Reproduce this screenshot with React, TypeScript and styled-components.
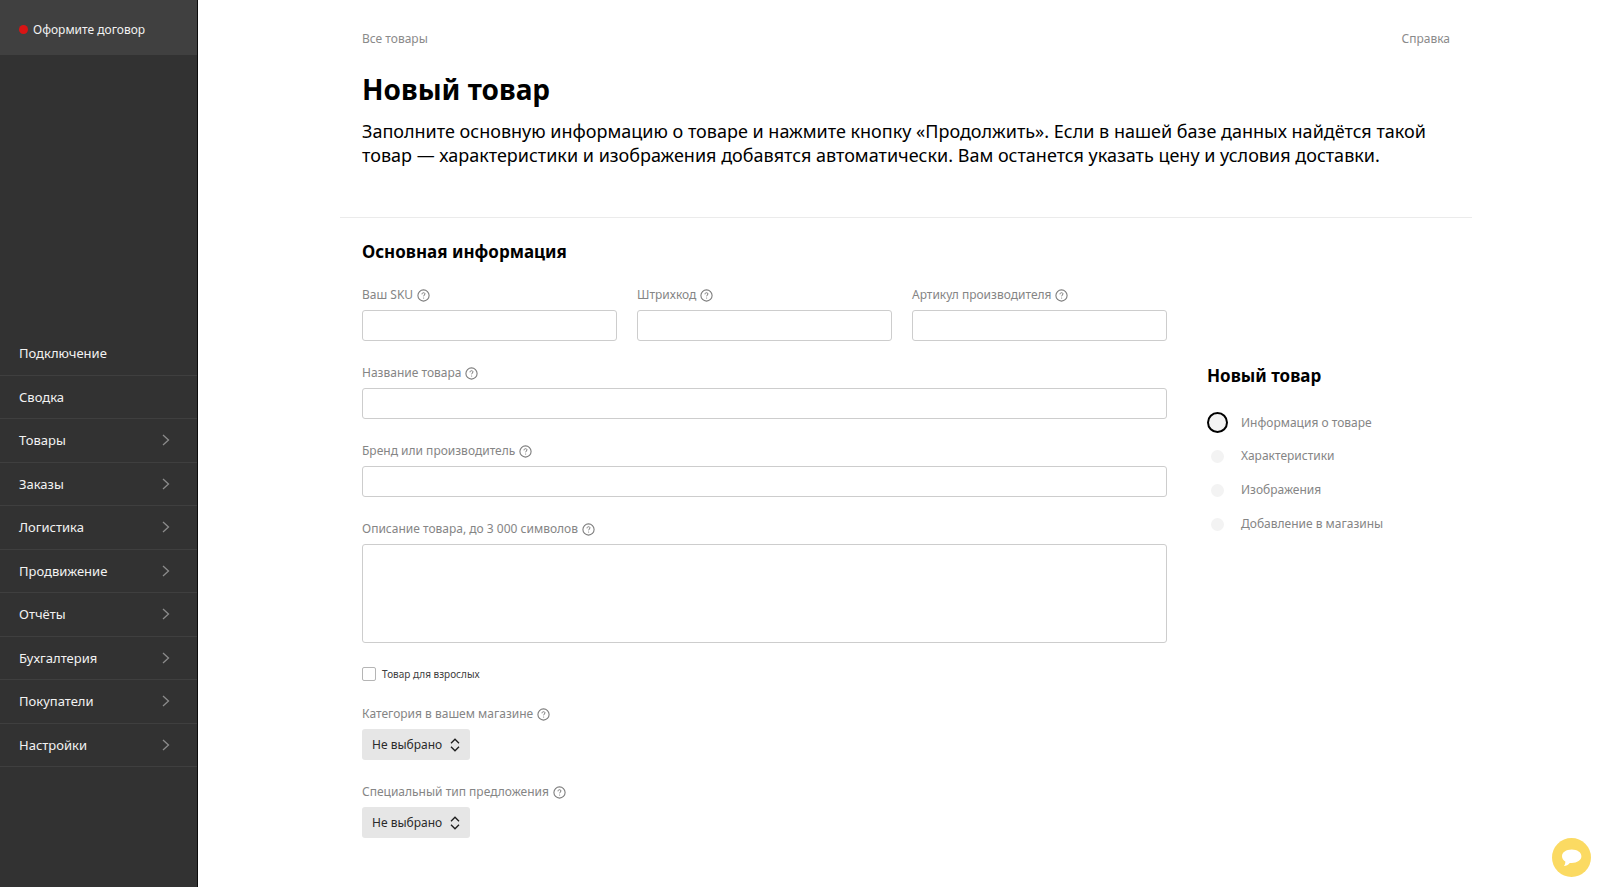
import React, { useId } from "react";
import styled, { createGlobalStyle, css } from "styled-components";

const GlobalStyle = createGlobalStyle`
  *, *::before, *::after { box-sizing: border-box; }
  body {
    margin: 0;
    background: #fff;
    color: #000;
    font-family: "Noto Sans", "Open Sans", sans-serif;
    font-size: 12px;
    line-height: 18px;
  }
  a { color: inherit; text-decoration: none; }
  input, textarea, select, button { font: inherit; color: inherit; }
`;

const Layout = styled.div`
  display: grid;
  grid-template-columns: 198px minmax(0, 1fr);
  min-height: 100vh;
`;

const Sidebar = styled.aside`
  display: flex;
  flex-direction: column;
  background: #323232;
  color: #f2f2f2;
  border-right: 1px solid #0c0c0c;
`;

const ContractLink = styled.a`
  display: flex;
  align-items: center;
  gap: 5px;
  height: 55px;
  padding: 4px 19px 0;
  background: #404040;
`;

const RedDot = styled.span`
  width: 9px;
  height: 9px;
  border-radius: 50%;
  background: #d91414;
`;

const Nav = styled.nav`
  display: flex;
  flex-direction: column;
  height: 435px;
  margin: auto 0 120px;
`;

const NavItem = styled.a`
  display: flex;
  flex: 1;
  align-items: center;
  justify-content: space-between;
  padding: 0 27px 0 19px;
  border-bottom: 1px solid #3f3f3f;
  font-size: 13px;
`;

const Main = styled.main`
  padding: 0 0 40px 14px;
`;

const Container = styled.div`
  max-width: 1132px;
  margin: 0 auto;
`;

const Header = styled.header`
  padding: 30px 22px 50px;
  border-bottom: 1px solid #ebebeb;
`;

const TopLinks = styled.div`
  display: flex;
  justify-content: space-between;
  color: #8a8a8a;
`;

const PageTitle = styled.h1`
  margin: 21px 0 10px;
  font-size: 28px;
  line-height: 40px;
  font-weight: 700;
`;

const Lead = styled.p`
  margin: 0;
  font-size: 18px;
  line-height: 24px;
`;

const Body = styled.div`
  display: grid;
  grid-template-columns: minmax(0, 1fr) 243px;
  gap: 40px;
  padding: 23px 22px 0;
`;

const Form = styled.form`
  display: flex;
  flex-direction: column;
  gap: 23px;
`;

const SectionTitle = styled.h2`
  margin: 0;
  font-size: 17px;
  line-height: 22px;
  font-weight: 700;
`;

const FieldRow = styled.div`
  display: grid;
  grid-template-columns: repeat(3, minmax(0, 1fr));
  gap: 20px;
`;

const Field = styled.div`
  display: flex;
  flex-direction: column;
  align-items: flex-start;
  gap: 6px;
`;

const LabelLine = styled.div`
  display: flex;
  align-items: center;
  gap: 4px;
  color: #858585;
`;

const HelpButton = styled.button`
  display: flex;
  padding: 0;
  border: 0;
  background: none;
  cursor: pointer;
`;

const control = css`
  display: block;
  width: 100%;
  margin: 0;
  padding: 4px 8px;
  border: 1px solid #cdcdcd;
  border-radius: 3px;
  background: #fff;
  outline-color: #ffdb4d;
`;

const TextInput = styled.input`
  ${control}
  height: 31px;
`;

const TextArea = styled.textarea`
  ${control}
  height: 99px;
  resize: none;
`;

const CheckLabel = styled.label`
  display: flex;
  align-items: center;
  gap: 6px;
  font-size: 10px;
  line-height: 16px;
  color: #404040;
`;

const Checkbox = styled.input`
  appearance: none;
  width: 14px;
  height: 14px;
  margin: 0;
  border: 1px solid #b5b5b5;
  border-radius: 2px;
  background: #fff;
  &:checked { background: #ffdb4d; }
`;

const SelectBox = styled.div`
  display: grid;
  align-items: center;
  & > * { grid-area: 1 / 1; }
  & > svg { justify-self: end; margin-right: 10px; pointer-events: none; }
`;

const Select = styled.select`
  appearance: none;
  width: 108px;
  height: 31px;
  padding: 0 24px 0 10px;
  border: 0;
  border-radius: 3px;
  background: #e6e6e6;
  color: #2b2b2b;
`;

const Progress = styled.aside`
  padding-top: 124px;
`;

const Steps = styled.ol`
  display: flex;
  flex-direction: column;
  gap: 14px;
  margin: 25px 0 0;
  padding: 0;
  list-style: none;
`;

const Step = styled.li`
  display: grid;
  grid-template-columns: 21px 1fr;
  align-items: center;
  gap: 13px;
  height: 20px;
  color: #858585;
`;

const StepMark = styled.span<{ $current?: boolean }>`
  justify-self: center;
  width: ${(p) => (p.$current ? 21 : 13)}px;
  height: ${(p) => (p.$current ? 21 : 13)}px;
  border: ${(p) => (p.$current ? "2px solid #000" : "0")};
  border-radius: 50%;
  background: #f3f3f3;
`;

const ChatButton = styled.button`
  position: fixed;
  right: 9px;
  bottom: 10px;
  display: flex;
  align-items: center;
  justify-content: center;
  width: 39px;
  height: 39px;
  padding: 0;
  border: 0;
  border-radius: 50%;
  background: #fbda62;
  cursor: pointer;
`;

const Chevron = () => (
  <svg width="8" height="12" viewBox="0 0 8 12" fill="none" stroke="#8c8c8c" strokeWidth="1.3" aria-hidden="true">
    <path d="M1 1l5.5 5L1 11" />
  </svg>
);

const HelpIcon = () => (
  <svg width="13" height="13" viewBox="0 0 13 13" fill="none" stroke="#7d7d7d" aria-hidden="true">
    <circle cx="6.5" cy="6.5" r="5.6" strokeWidth="1.1" />
    <path d="M5 5.3c0-1 .6-1.6 1.5-1.6s1.5.5 1.5 1.3c0 1-1.4 1.1-1.4 2.3" strokeWidth="1" />
    <circle cx="6.6" cy="9" r="0.6" fill="#7d7d7d" stroke="none" />
  </svg>
);

const UpDown = () => (
  <svg width="10" height="14" viewBox="0 0 10 14" fill="none" stroke="#1c1c1c" strokeWidth="1.3" aria-hidden="true">
    <path d="M1 5.2l4-4 4 4M1 8.8l4 4 4-4" />
  </svg>
);

const Bubble = () => (
  <svg width="21" height="18" viewBox="0 0 21 18" fill="#fff" aria-hidden="true">
    <path d="M10.7 0.6C16.2 0.6 20.4 3.4 20.4 7.3S16.2 14 10.7 14c-.7 0-1.3 0-1.9-.1C7.3 15.6 5.2 16.9 2.9 17.1 4 16 4.4 14.4 4.3 12.6 2.2 11.4 1 9.5 1 7.3 1 3.4 5.2.6 10.7.6z" />
  </svg>
);

type LabeledProps = { label: string; children: (id: string) => React.ReactNode };

const Labeled = ({ label, children }: LabeledProps) => {
  const id = useId();
  return (
    <Field>
      <LabelLine>
        <label htmlFor={id}>{label}</label>
        <HelpButton type="button" aria-label={`Подсказка: ${label}`}>
          <HelpIcon />
        </HelpButton>
      </LabelLine>
      {children(id)}
    </Field>
  );
};

const TextField = ({ label }: { label: string }) => (
  <Labeled label={label}>{(id) => <TextInput id={id} type="text" />}</Labeled>
);

const SelectField = ({ label }: { label: string }) => (
  <Labeled label={label}>
    {(id) => (
      <SelectBox>
        <Select id={id}>
          <option>Не выбрано</option>
        </Select>
        <UpDown />
      </SelectBox>
    )}
  </Labeled>
);

const navItems = [
  { title: "Подключение" },
  { title: "Сводка" },
  { title: "Товары", nested: true },
  { title: "Заказы", nested: true },
  { title: "Логистика", nested: true },
  { title: "Продвижение", nested: true },
  { title: "Отчёты", nested: true },
  { title: "Бухгалтерия", nested: true },
  { title: "Покупатели", nested: true },
  { title: "Настройки", nested: true },
];

const steps = ["Информация о товаре", "Характеристики", "Изображения", "Добавление в магазины"];

export default function App() {
  return (
    <>
      <GlobalStyle />
      <Layout>
        <Sidebar>
          <ContractLink href="#contract">
            <RedDot />
            Оформите договор
          </ContractLink>
          <Nav>
            {navItems.map((item) => (
              <NavItem key={item.title} href="#">
                {item.title}
                {item.nested && <Chevron />}
              </NavItem>
            ))}
          </Nav>
        </Sidebar>
        <Main>
          <Container>
            <Header>
              <TopLinks>
                <a href="#all">Все товары</a>
                <a href="#help">Справка</a>
              </TopLinks>
              <PageTitle>Новый товар</PageTitle>
              <Lead>
                Заполните основную информацию о товаре и нажмите кнопку «Продолжить». Если в нашей базе данных
                найдётся такой товар — характеристики и изображения добавятся автоматически. Вам останется указать
                цену и условия доставки.
              </Lead>
            </Header>
            <Body>
              <Form>
                <SectionTitle>Основная информация</SectionTitle>
                <FieldRow>
                  <TextField label="Ваш SKU" />
                  <TextField label="Штрихкод" />
                  <TextField label="Артикул производителя" />
                </FieldRow>
                <TextField label="Название товара" />
                <TextField label="Бренд или производитель" />
                <Labeled label="Описание товара, до 3 000 символов">{(id) => <TextArea id={id} />}</Labeled>
                <CheckLabel>
                  <Checkbox type="checkbox" />
                  Товар для взрослых
                </CheckLabel>
                <SelectField label="Категория в вашем магазине" />
                <SelectField label="Специальный тип предложения" />
              </Form>
              <Progress>
                <SectionTitle>Новый товар</SectionTitle>
                <Steps>
                  {steps.map((step, i) => (
                    <Step key={step}>
                      <StepMark $current={i === 0} />
                      {step}
                    </Step>
                  ))}
                </Steps>
              </Progress>
            </Body>
          </Container>
        </Main>
      </Layout>
      <ChatButton type="button" aria-label="Чат">
        <Bubble />
      </ChatButton>
    </>
  );
}
